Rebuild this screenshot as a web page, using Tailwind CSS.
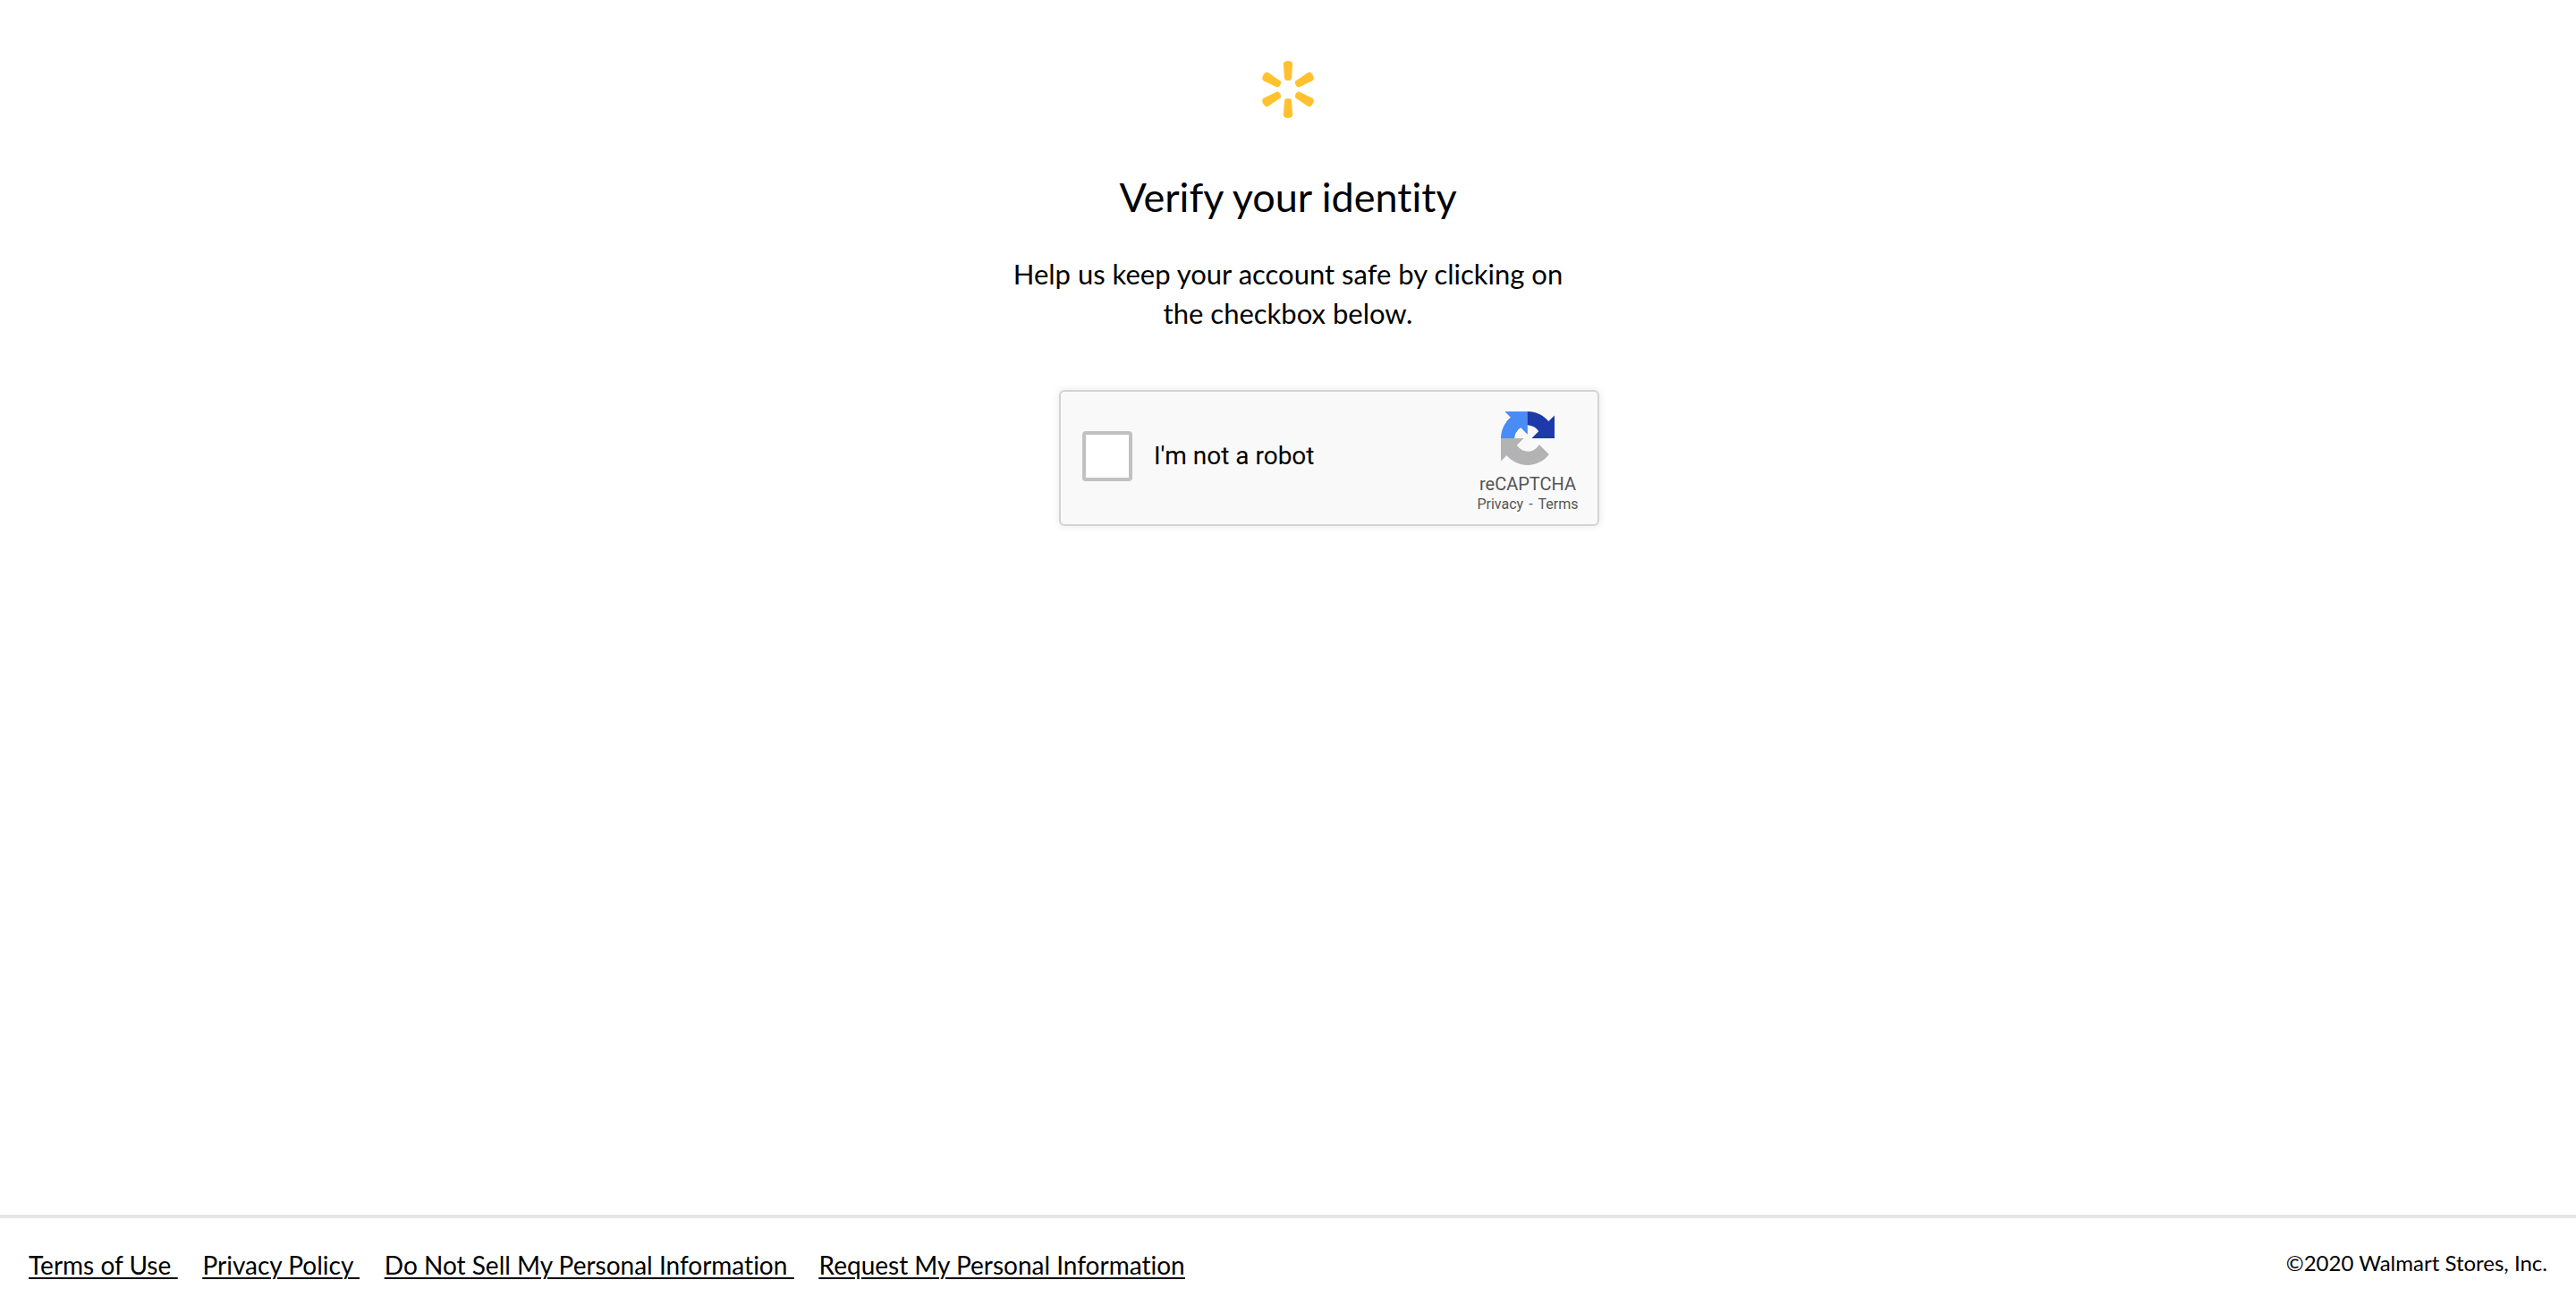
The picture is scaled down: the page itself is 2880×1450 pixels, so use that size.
<!DOCTYPE html>
<html lang="en">
<head>
<meta charset="utf-8">
<meta name="viewport" content="width=device-width, initial-scale=1">
<title>Verify your identity</title>
<script src="https://cdn.jsdelivr.net/npm/@tailwindcss/browser@4"></script>
</head>
<body class="flex min-h-screen flex-col bg-white font-[Lato,sans-serif] text-black [font-variant-ligatures:none]">
  <main class="flex grow flex-col items-center pt-[68px]">
    <svg class="h-16 w-16" viewBox="-32 -32 64 64" fill="#ffc22e" role="img" aria-label="Walmart">
      <defs><path id="ray" d="M-5.200-28.500C-5.200-30.800-3-32 0-32S5.200-30.800 5.200-28.500L4-12.600C3.800-10.800 2.200-10 0-10S-3.800-10.800-4-12.600Z"/></defs>
      <use href="#ray"/>
      <use href="#ray" transform="rotate(60)"/>
      <use href="#ray" transform="rotate(120)"/>
      <use href="#ray" transform="rotate(180)"/>
      <use href="#ray" transform="rotate(240)"/>
      <use href="#ray" transform="rotate(300)"/>
    </svg>
    <h1 class="mt-14 text-[45px] leading-[64px]">Verify your identity</h1>
    <p class="mt-8 max-w-[656px] text-center text-[31px] leading-[44px]">Help us keep your account safe by clicking on<br>the checkbox below.</p>
    <div class="mt-16 w-[512px]">
      <div class="flex h-[152px] w-[604px] items-center rounded-md border-2 border-[#d3d3d3] bg-[#f9f9f9] pb-1 pl-6 font-[Roboto,sans-serif] shadow-[0_0_8px_1px_rgba(0,0,0,0.08)]">
        <input id="robot" type="checkbox" class="h-14 w-14 appearance-none rounded border-4 border-[#c1c1c1] bg-white">
        <label for="robot" class="ml-6 grow text-[28px] leading-9">I'm not a robot</label>
        <div class="mt-[22px] flex w-[156px] flex-col items-center self-start text-[#555]">
          <svg class="h-[60px] w-[60px]" viewBox="0 0 64 64" aria-hidden="true">
            <path fill="#1c3aa9" d="M64 31.955l-.033-1.370V4.687l-7.160 7.160C50.948 4.674 42.033.093 32.050.093c-10.400 0-19.622 4.960-25.458 12.640l11.736 11.860a15.550 15.550 0 0 1 4.754-5.334c2.050-1.600 4.952-2.906 8.968-2.906.485 0 .860.057 1.135.163 4.976.393 9.288 3.140 11.828 7.124l-8.307 8.307L64 31.953"/>
            <path fill="#4a8cf5" d="M31.862.094l-1.370.033H4.594l7.160 7.160C4.580 13.147 0 22.060 0 32.046c0 10.400 4.960 19.622 12.640 25.458L24.500 45.768a15.550 15.550 0 0 1-5.334-4.754c-1.600-2.050-2.906-4.952-2.906-8.968 0-.485.057-.860.163-1.135.393-4.976 3.140-9.288 7.124-11.828l8.307 8.307L31.860.095"/>
            <path fill="#b3b3b3" d="M.001 32.045l.033 1.370v25.898l7.160-7.160c5.860 7.173 14.774 11.754 24.760 11.754 10.400 0 19.622-4.960 25.458-12.640l-11.736-11.860a15.550 15.550 0 0 1-4.754 5.334c-2.050 1.600-4.952 2.906-8.968 2.906-.485 0-.860-.057-1.135-.163-4.976-.393-9.288-3.140-11.828-7.124l8.307-8.307-37.298.047"/>
          </svg>
          <div class="mt-2 text-[20px] leading-[26px]">reCAPTCHA</div>
          <div class="flex gap-1.5 text-[16px] leading-5"><a href="#">Privacy</a><span>-</span><a href="#">Terms</a></div>
        </div>
      </div>
    </div>
  </main>
  <footer class="flex items-start justify-between border-t-4 border-[#e6e7e8] px-8 pt-8 pb-4">
    <nav class="flex gap-7 whitespace-pre text-[28px] leading-10 underline decoration-2 underline-offset-[3px]"><a href="#">Terms of Use </a><a href="#">Privacy Policy </a><a href="#">Do Not Sell My Personal Information </a><a href="#">Request My Personal Information</a></nav>
    <p class="text-[24px] leading-9">©2020 Walmart Stores, Inc.</p>
  </footer>
</body>
</html>
